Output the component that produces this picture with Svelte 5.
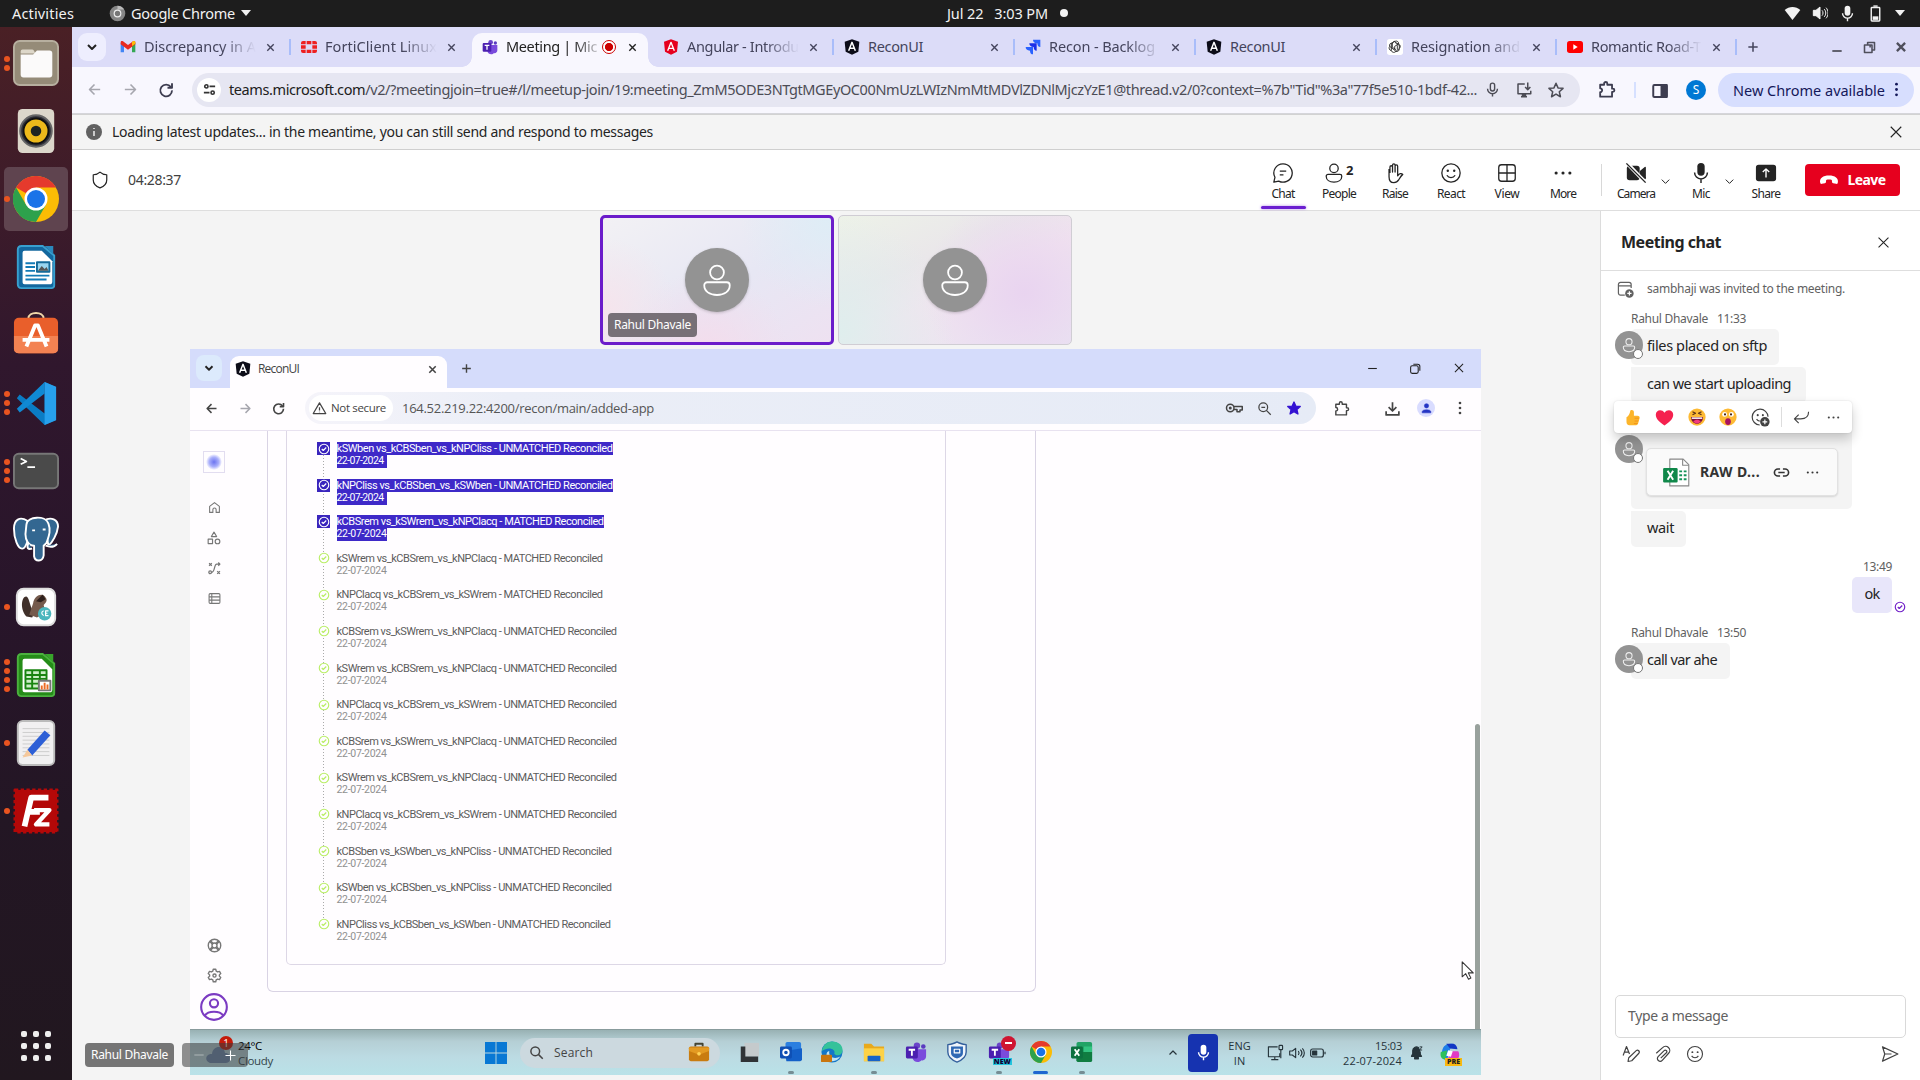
<script>
  // Tightens or loosens tracking so a label takes up a fixed width.
  function fit(node, width) {
    const natural = node.getBoundingClientRect().width;
    const count = node.textContent.length;
    node.style.letterSpacing = `${(width - natural) / count}px`;
  }

  const person = '<circle cx="12" cy="7" r="4.6"/><path d="M5.5 13.5h13a2 2 0 0 1 2 2c0 4-3.5 6.5-8.5 6.5s-8.500-2.500-8.500-6.500a2 2 0 0 1 2-2z"/>';
  const chromeLogo =
    '<g stroke="none"><circle cx="12" cy="12" r="12" fill="#fbbc05"/><path d="M12 12 1.600 6A12 12 0 0 1 22.400 6H12z" fill="#e53a2d"/><path d="M1.600 6A12 12 0 0 0 12 24l5.200-9L12 12 6.800 15z" fill="#2da14c"/><circle cx="12" cy="12" r="6" fill="#fff"/><circle cx="12" cy="12" r="4.700" fill="#1a73e8"/></g>';
  const icons = {
    chevron: '<path d="m6 9 6 6 6-6"/>',
    up: '<path d="m5 15 7-7 7 7"/>',
    x: '<path d="M5 5l14 14M19 5 5 19"/>',
    plus: '<path d="M12 4v16M4 12h16"/>',
    minus: '<path d="M4 12h16"/>',
    back: '<path d="M20 12H5M12 5l-7 7 7 7"/>',
    forward: '<path d="M4 12h15M12 5l7 7-7 7"/>',
    reload: '<path d="M18.500 8A7.800 7.800 0 1 0 20 12.500"/><path d="M20 3v6h-6" />',
    tune: '<circle cx="7" cy="7" r="2.600"/><path d="M12 7h9M3 17h9"/><circle cx="17" cy="17" r="2.600"/>',
    mic: '<rect x="9" y="3" width="6" height="11" rx="3"/><path d="M5 11a7 7 0 0 0 14 0M12 18v4"/>',
    micFill: '<rect x="8" y="1" width="8" height="14" rx="4" fill="currentColor" stroke="none"/><path d="M5 11.500a7 7 0 0 0 14 0M12 18.500V23"/>',
    install: '<path d="M13 4H4v13h17v-4M8 21h8M9 19h6"/><path d="M17 2v9M13.500 8l3.500 3.500L20.500 8"/>',
    star: '<path d="m12 3 2.700 6.200 6.700.6-5 4.500 1.500 6.700-5.900-3.600L6.100 21l1.500-6.700-5-4.500 6.700-.6z"/>',
    starFill: '<path d="m12 3 2.700 6.200 6.700.6-5 4.500 1.500 6.700-5.900-3.600L6.100 21l1.500-6.700-5-4.500 6.700-.6z" fill="currentColor"/>',
    puzzle: '<path d="M4 6h5V4.500a2 2 0 0 1 4 0V6h6v5h1a2 2 0 0 1 0 4h-1v6H4v-5.500a2.500 2.500 0 0 0 0-5z"/>',
    panel: '<rect x="3" y="4" width="18" height="16" rx="1.500"/><path d="M14 4h7v16h-7z" fill="currentColor"/>',
    dots: '<g fill="currentColor" stroke="none"><circle cx="12" cy="4.500" r="2"/><circle cx="12" cy="12" r="2"/><circle cx="12" cy="19.500" r="2"/></g>',
    more: '<g fill="currentColor" stroke="none"><circle cx="4.500" cy="12" r="1.700"/><circle cx="12" cy="12" r="1.700"/><circle cx="19.500" cy="12" r="1.700"/></g>',
    restore: '<rect x="4" y="8" width="12" height="12"/><path d="M9 8V4h11v12h-4M13 8v4"/>',
    winRestore: '<rect x="3" y="7" width="14" height="14" rx="3"/><path d="M8 4h8a4 4 0 0 1 4 4v8"/>',
    info: '<circle cx="12" cy="12" r="12" fill="#616161" stroke="none"/><path d="M12 10.500V18M12 6v1.500" stroke="#fff"/>',
    shield: '<path d="M12 1.500C9.500 4 6.500 5 3 5v7c0 5 3.500 8.500 9 10.500 5.500-2 9-5.500 9-10.500V5c-3.500 0-6.500-1-9-3.500z"/>',
    chat: '<path d="M12 2a10 10 0 1 1-4.700 18.800L2 22l1.200-5.300A10 10 0 0 1 12 2zM8.500 10h7M8.500 14h4"/>',
    person,
    hand: '<path d="M6.500 12V5.500a1.400 1.400 0 0 1 2.800 0V11 3.500a1.400 1.400 0 0 1 2.800 0V11 4.500a1.400 1.400 0 0 1 2.800 0V15c2-2.500 4-3 5.600-1.500-2 1.500-3 3.500-4.500 6-1.200 2-3 3-5.200 3-4 0-5.300-3-5.300-6.500V7.500"/>',
    smile: '<circle cx="12" cy="12" r="10"/><path d="M7.500 14.500c2 3.300 7 3.300 9 0"/><g fill="currentColor" stroke="none"><circle cx="8.500" cy="9.500" r="1.300"/><circle cx="15.500" cy="9.500" r="1.300"/></g>',
    grid: '<rect x="3" y="3" width="18" height="18" rx="3"/><path d="M12 3v18M3 12h18"/>',
    cameraOff: '<rect x="2" y="4" width="14" height="16" rx="3" fill="currentColor" stroke="none"/><path d="M17 10l5-4v12l-5-4z" fill="currentColor"/><path d="M2 1l21 22" stroke="#fff" stroke-width="4"/><path d="M1.500 1.500l21 21"/>',
    share: '<rect x="1" y="3" width="22" height="18" rx="3" fill="currentColor" stroke="none"/><path d="M12 17V8M8.500 11 12 7.500l3.500 3.500" stroke="#fff"/>',
    hangup: '<path d="M1.500 15.500C0 9.500 5 6.500 12 6.500s12 3 10.500 9c-.3 1-1 1.300-2 1.100l-3.500-.7c-1-.2-1.300-.8-1.400-1.700l-.2-2.200c-2-.8-4.800-.8-6.800 0l-.2 2.200c-.1.900-.4 1.500-1.400 1.700l-3.500.7c-1 .2-1.700-.1-2-1.100z" fill="currentColor" stroke="none"/>',
    calendar: '<path d="M11 20H5a3 3 0 0 1-3-3V5a3 3 0 0 1 3-3h12a3 3 0 0 1 3 3v5M2 7h18"/><circle cx="17.500" cy="17.500" r="6" fill="currentColor" stroke="none"/><path d="M17.500 14.500v6M14.500 17.500h6" stroke="#fff"/>',
    reply: '<path d="M8 8l-6 6 6 6M2 14h9c7 0 11-3.500 11-10"/>',
    addEmoji: '<path d="M11 21.500A10 10 0 1 1 21.500 11M7 14c1 1.500 2 2.200 4 2.500"/><g fill="currentColor" stroke="none"><circle cx="8.500" cy="9" r="1.300"/><circle cx="15" cy="9" r="1.300"/><circle cx="17.500" cy="17.500" r="6"/></g><path d="M17.500 14.500v6M14.500 17.500h6" stroke="#fff"/>',
    link: '<path d="M10 7H7a5 5 0 0 0 0 10h3M14 7h3a5 5 0 0 1 0 10h-3M7.500 12h9"/>',
    format: '<path d="M1.500 14 6 2l4 10M3.500 9.500h5.500M8 22l1-5L19 7.500a2.500 2.500 0 0 1 3.500 3.500L13 21l-5 1z"/>',
    clip: '<path d="m3 11 8.500-7.500a5.300 5.300 0 0 1 8 7.500L11 20.500a3.700 3.700 0 0 1-5.500-5L13.500 7.500a2 2 0 0 1 3 2.800L9 17.500"/>',
    send: '<path d="M2 2.500 22.500 12 2 21.500 5 12zM5 12h9"/>',
    checkCircle: '<circle cx="12" cy="12" r="9.500"/><path d="m7.500 12 3 3 6-6"/>',
    warn: '<path d="M12 3 22 20H2zM12 10v5M12 17v1"/>',
    key: '<circle cx="7" cy="12" r="5"/><circle cx="7" cy="12" r="1"/><path d="M12 10h11v4.500h-3V17h-4v-3h-4"/>',
    zoom: '<circle cx="10" cy="10" r="7"/><path d="m15 15 7 7M7 10h6"/>',
    search: '<circle cx="10" cy="10" r="7"/><path d="m15 15 7 7"/>',
    download: '<path d="M12 3v12M6.500 10l5.500 5.500L17.500 10M3 16v5h18v-5"/>',
    user: '<circle cx="12" cy="7" r="4" fill="currentColor"/><path d="M4 20v-2c0-5 16-5 16 0v2z" fill="currentColor"/>',
    home: '<path d="M3 21V10l9-7 9 7v11h-6v-5a3 3 0 0 0-6 0v5z"/>',
    shapes: '<path d="m12 2 4.500 7.500h-9z"/><rect x="2" y="14" width="7.500" height="7.500"/><circle cx="18" cy="17.800" r="4"/>',
    route: '<path d="m2 2 5 5M7 2 2 7M17 17l5 5M22 17l-5 5M22 4h-6c-5 0-3 15-9 15M19 1l3 3-3 3"/><circle cx="4" cy="19" r="2.500"/>',
    list: '<rect x="2" y="3" width="20" height="18" rx="2"/><path d="M2 9h20M2 15h20M7 3v18"/>',
    help: '<circle cx="12" cy="12" r="10"/><circle cx="12" cy="12" r="4"/><path d="m5 5 4 4M19 5l-4 4M5 19l4-4M19 19l-4-4" stroke-width="4"/>',
    gear: '<path d="M10 2h4l.7 3 2.300 1.300 3-.9 2 3.400L19.800 11v2l2.200 2.200-2 3.400-3-.9-2.300 1.300-.7 3h-4l-.7-3L7 17.700l-3 .9-2-3.400L4.200 13v-2L2 8.800l2-3.400 3 .9L9.300 5z"/><circle cx="12" cy="12" r="2.500"/>',
    account: '<circle cx="12" cy="12" r="11"/><circle cx="12" cy="8.800" r="3.500"/><path d="M4 19.500c3-4.500 13-4.500 16 0"/>',
    wifi: '<path d="M1 7C7 1.500 17 1.500 23 7L12 21z" fill="currentColor" stroke="none"/>',
    sound: '<path d="M2 8h4l6-5v18l-6-5H2z" fill="currentColor"/><path d="M15 8c2 2 2 6 0 8M18 6c3.500 3 3.500 9 0 12M21 4c4 4 4 12 0 16"/>',
    soundLine: '<path d="M1 9h4l5-4v14l-5-4H1zM14 9c1.500 2 1.500 4 0 6M17 7c3 3 3 7 0 10M20 5c4 4 4 10 0 14"/>',
    battery: '<rect x="6" y="3.500" width="12" height="19" rx="1"/><path d="M9 1.500h6"/><path d="M8 16h8v5H8z" fill="currentColor" stroke="none"/>',
    batteryFlat: '<rect x="1" y="6" width="19" height="12" rx="3"/><path d="M22.500 10v4"/><path d="M4 9h6v6H4z" fill="currentColor"/>',
    monitor: '<path d="M15 4H2v14h16v-5M6 22h10M11 18v4"/><rect x="17" y="2" width="5" height="6" rx="1"/><path d="M19.500 8v12"/>',
    bell: '<path d="M4 18 6 14V9a6 6 0 0 1 9-5l3 8v3l2 3zM9 20h6v2H9z" fill="currentColor"/><path d="M10 8h4l-4 5h4M17 3h4l-4 5h4" stroke-width="1.500"/>',
    cursor: '<path d="M4 1v19l4.500-4 3.500 7 3-1.500-3.300-6.500H18z" fill="#fff"/>',
    chrome: chromeLogo,
    chromeGray: '<g stroke="none"><circle cx="12" cy="12" r="11" fill="#858585"/><path d="M12 1a11 11 0 0 1 9.500 5.500H12z" fill="#bbb"/><path d="m12 23 9.500-16.500L17 14z" fill="#ddd"/><circle cx="12" cy="12" r="5.500" fill="#eee"/><circle cx="12" cy="12" r="3.800" fill="#777"/></g>',
    gmail: '<g stroke="none"><path d="M1 20V6l5 4v10z" fill="#4285f4"/><path d="M18 20V10l5-4v14z" fill="#34a853"/><path d="M1 8V5c0-2 2-2.500 3.500-1.500L12 9l7.500-5.500C21 2.500 23 3 23 5v3L12 16z" fill="#ea2a1f"/><path d="M18 10.500 23 7V5c0-2-2-2.500-3.500-1.500L18 4.600z" fill="#fbbc04"/></g>',
    forti: '<path d="M0 6q0-3 3-3h4v5H0zM8.500 3h7v5h-7zM17 3h4q3 0 3 3v2h-7zM0 9.500h7v5H0zM17 9.500h7v5h-7zM0 16h7v5H3q-3 0-3-3zM8.500 16h7v5h-7zM17 16h7v2q0 3-3 3h-4z" fill="#ee2020" stroke="none"/>',
    teams: '<g stroke="none"><circle cx="13" cy="5" r="3.500" fill="#6b45c9"/><circle cx="20" cy="6" r="2.500" fill="#5a3bc0"/><path d="M8 9h15v8c0 3-3 5-5 4-2 3-9 3-10-3z" fill="#7a4bdc"/><rect x="1" y="6" width="13" height="13" rx="1.500" fill="#4b1fb0"/></g><path d="M4 9.500h7M7.500 9.500V16" stroke="#fff" stroke-width="2"/>',
    angular: '<path d="M12 .5 22.500 4 21 19l-9 4.500L3 19 1.500 4z" fill="#e6001e" stroke="none"/><path d="M7 17.500 12 5l5 12.500M8.500 14h7" stroke="#fff" stroke-width="2"/>',
    angularDark: '<path d="M12 .5 23 4l-1.500 15L12 23.500 2.500 19 1 4z" fill="#0c0c18" stroke="none"/><path d="M7 17.500 12 5l5 12.500M8.500 14h7" stroke="#fff" stroke-width="2.200"/>',
    jira: '<g stroke="none"><path d="M12 1h11v11c-3 0-4.500-2-4.500-5.500C14 6.500 12 4 12 1z" fill="#2a62ff"/><path d="M6.500 6.500h11v11c-3 0-4.500-2-4.500-5.500-4.500 0-6.500-2.500-6.500-5.500z" fill="#1b2fe8"/><path d="M1 12h11v11c-3 0-4.500-2-4.500-5.500C3 17.500 1 15 1 12z" fill="#2a62ff"/></g>',
    gpt: '<rect width="24" height="24" rx="4" fill="#fff" stroke="none"/><g stroke="#222" stroke-width="1.300"><path d="M12 3.500c3-1.500 6 1 5.500 4 3 1.500 3 5 1 6.500.5 3.500-2.500 5.500-5 4.500-2 2.500-6 2-7-1-3-.5-4.500-4-2.500-6.500C3 8 5.500 5.500 8 6c.5-1.500 2-2.700 4-2.500z"/><path d="M8 6v6.500l5.500 3.500M12 3.500 6.500 7v10.500M17.500 7.500 12 4.800M17.500 7.500 11.500 11v5M18.500 14V9.500L13 6.500M13.500 18.500l5-4M4 11l9.500 7.500M15.500 9.500V16"/></g>',
    youtube: '<rect y="3" width="24" height="18" rx="4" fill="#f00" stroke="none"/><path d="m9.500 8 6.500 4-6.500 4z" fill="#fff" stroke="none"/>',
    thumb: '<path d="M3.500 11.500c3-1.500 4.500-4.500 5.500-9.500 2.500-1.500 5 0 5 2.500V9.500h5c2.500 0 3.500 1.500 3 3.500l-2 7c-.5 2-2 3-4 3H7.500c-2.500 0-4-2-4-5z" fill="#fcb52b" stroke="none"/><path d="M15 13h6M15 17h5M14 20.500h5" stroke="#ef8f1c" stroke-width="1.200"/>',
    heart: '<path d="M12 22C6 18 1 14 1 8.500 1 2 9 1 12 6c3-5 11-4 11 2.500C23 14 18 18 12 22z" fill="#f5214f" stroke="none"/>',
    laugh: '<g stroke="none"><circle cx="12" cy="12" r="11.500" fill="#fdba34"/><path d="M4 12h16c0 12-16 12-16 0z" fill="#7c1238"/><path d="M5 12.500h14v2H5z" fill="#fff"/><path d="M7 18c3-3 7-3 10 0-3 3.500-7 3.500-10 0z" fill="#f33a7c"/></g><path d="m6 5 4 2-4 2M18 5l-4 2 4 2" stroke="#55301a" stroke-width="1.600"/>',
    wow: '<g stroke="none"><circle cx="12" cy="12" r="11.500" fill="#fdba34"/><circle cx="7.500" cy="8.500" r="3.300" fill="#fff"/><circle cx="16.500" cy="8.500" r="3.300" fill="#fff"/><circle cx="8" cy="8.500" r="1.400" fill="#402218"/><circle cx="16" cy="8.500" r="1.400" fill="#402218"/><ellipse cx="12" cy="18" rx="3.800" ry="4.500" fill="#a8125f"/></g>',
    excelFile: '<path d="M7 1h12l5 5v19H7z" fill="#fff" stroke="#888" stroke-width="1"/><path d="M18.500 1v5.500H24" stroke="#888" stroke-width="1"/><rect x="1" y="9" width="13" height="13" rx="1" fill="#10884a" stroke="none"/><path d="m5 11.500 5 8M10 11.500l-5 8" stroke="#fff" stroke-width="1.700"/><path d="M15.500 12h2.500M19.500 12H22M15.500 15.500H18M19.500 15.500H22M15.500 19H18M19.500 19H22" stroke="#15925a" stroke-width="1.700"/>',
    excel: '<g stroke="none"><rect x="6" y="1" width="17" height="22" rx="2" fill="#21a366"/><path d="M6 12h17v9a2 2 0 0 1-2 2H8a2 2 0 0 1-2-2z" fill="#107c41"/><path d="M14 6h9v6h-9z" fill="#33c481"/><rect y="6" width="13" height="13" rx="1.500" fill="#0c7140"/></g><path d="m4 9 5 7M9 9l-5 7" stroke="#fff"/>',
    outlook: '<g stroke="none"><rect x="6" y="1" width="17" height="16" rx="2" fill="#2b7fe0"/><path d="M5 11 24 8v12a2 2 0 0 1-2 2H7z" fill="#1460c8"/><rect y="6" width="13" height="13" rx="1.500" fill="#0f4fb4"/></g><circle cx="6.500" cy="12.500" r="3" stroke="#fff"/>',
    edge: '<g stroke="none"><circle cx="12" cy="12" r="11.500" fill="#1376c8"/><path d="M1 11C2 4 7 .5 12 .5c8 0 12 5 11.500 10-.5 6-8 6-9 3 2-5-7-8-13.500-2.500z" fill="#35c29a"/><path d="M9 11c-1 8 7 9 12 6-4 7-14 7-15-2 0-2 1-3.500 3-4z" fill="#bfe3f4"/><rect x="0" y="15" width="12" height="8" rx="1" fill="#c9760f"/></g>',
    folder: '<g stroke="none"><path d="M1 3h8l3 3h11v16H1z" fill="#e9a91c"/><path d="M1 8h22v14H1z" fill="#fdd247"/><rect x="5" y="16" width="14" height="6" rx="1" fill="#1763c8"/></g>',
    defender: '<path d="M12 1c3 2 6 2.500 10 3v8c0 6-5 9-10 11C7 21 2 18 2 12V4c4-.5 7-1 10-3z" fill="#f0f5fb" stroke="#335f9c" stroke-width="1.500"/><path d="M5.500 6h13v7c0 3-3 5-6.500 6-3.500-1-6.500-3-6.500-6z" fill="#2f68b4" stroke="none"/><path d="M9 9h6v4H9z" stroke="#fff" stroke-width="1.300"/>',
    taskview: '<g stroke="none"><rect x="7" y="2" width="16" height="15" fill="#c5cacc"/><path d="M3 6h5v11h14v6H3z" fill="#303336"/></g>',
    briefcase: '<path d="M8 6V3h8v3" stroke="#443"/><rect x="1" y="6" width="22" height="16" rx="2" fill="#c97c10" stroke="none"/><path d="M1 7h22v4l-11 4-11-4z" fill="#e39a22" stroke="none"/><circle cx="12" cy="14" r="2" fill="#ffd255" stroke="none"/>',
    windows: '<path d="M0 0h11.500v11.500H0zM12.500 0H24v11.500H12.500zM0 12.500h11.500V24H0zM12.500 12.500H24V24H12.500z" fill="#0878d4" stroke="none"/>',
    copilot: '<g stroke="none"><path d="M3 14C3 4 8 1 15 2l-3 6-3 11c-4 1-6-1-6-5z" fill="#1f7fe8"/><path d="M8 2h8c3 1 4 4 4 6l-8-1z" fill="#1236c4"/><path d="M21 10c3 5-1 12-6 12H8l5-12z" fill="#e23bc5"/><path d="m2 11 7-2-2 10c-5 0-6-4-5-8z" fill="#2fc05c"/><path d="m10 9 5 1-2 6-5-1z" fill="#fff"/></g>',
    files: '<rect x="1" y="1" width="46" height="46" rx="6" fill="#958b78" stroke="#b7af9f"/><path d="M8 12q0-2 2-2h10q2 0 3 4h-15z" fill="#ddd7c9" stroke="none"/><path d="M8 15h13l4-4h13q3 0 3 3v22q0 3-3 3H11q-3 0-3-3z" fill="#fbfafa" stroke="none"/>',
    rhythm: '<rect x="5" y="1" width="38" height="46" rx="5" fill="#dcd7cb" stroke="none"/><circle cx="24" cy="24" r="16.500" fill="#30313a" stroke="#666"/><circle cx="24" cy="24" r="13" fill="#edb91b" stroke="#111"/><circle cx="24" cy="24" r="5.500" fill="#1e2322" stroke="none"/>',
    writer: '<path d="M9 2h22l12 10v31q0 3-3 3H9q-4 0-4-4V6q0-4 4-4z" fill="#13679e" stroke="#38a0cf"/><path d="M33 2h9v9z" fill="#2a89bd" stroke="none"/><path d="M10 9q0-2 2-2h18l11 11v21q0 3-3 3H12q-2 0-2-2z" fill="#fff" stroke="none"/><path d="M13 20h10M13 24h10M13 28h10M13 33h25M13 37h22" stroke="#137bb6"/><rect x="25" y="19" width="13" height="10" fill="#9ad5ef" stroke="#156a99"/><path d="m26 28 4-5 3 3 2-2 2 4z" fill="#555" stroke="none"/>',
    software: '<path d="M16 7c0-8 16-8 16 0" stroke="#f1d8a9" stroke-width="2"/><rect x="1" y="6" width="46" height="37" rx="5" fill="#e95f2b" stroke="none"/><path d="M1 25h46v13q0 5-5 5H6q-5 0-5-5z" fill="#f38252" stroke="none"/><path d="M14 36 23 14h3l9 22M10 29h28" stroke="#fff" stroke-width="4"/>',
    vscode: '<path d="M33 2 44 7v35l-11 5L4 19l3-4 26 20z" fill="#0a7cc4" stroke="none"/><path d="M33 2 4 30l3 4 26-20z" fill="#1089d3" stroke="none"/><path d="m33 2 12 5v35l-12 5z" fill="#27a0ec" stroke="none"/>',
    terminal: '<rect x="1" y="6" width="46" height="36" rx="5" fill="#4a4a4a" stroke="#777"/><path d="m8 11 6 3-6 3M15 20h8" stroke="#fff" stroke-width="1.800"/>',
    postgres: '<g fill="#336791" stroke="#fff" stroke-width="2"><path d="M15 5C7 0 1 4 1 13c0 10 4 22 9 21 3 0 4-5 6-10z"/><path d="M32 5c8-5 15-1 15 6-1 8-6 17-10 20z"/><path d="M14 9c1-9 20-10 23-1 3 8 0 14-2 20l-3 3v10c-1 7-9 7-10 1V31c-6 0-9-6-9-12z"/><path d="M34 31q8 3 12-2M16 28q-3 8 4 6"/></g><path d="M20 15h3M31 14h3" stroke="#fff"/>',
    beaver: '<rect x="4" y="5" width="40" height="38" rx="7" fill="#fff" stroke="#ddd"/><path d="M14 34C6 24 10 12 14 13c4 2 3 13 9 16l-3 6z" fill="#40302a" stroke="none"/><path d="M21 20c1-8 10-12 13-6 3 4-1 6-2 8l2 8-9 5-8-3z" fill="#745a4c" stroke="none"/><path d="m24 18 7-7 3 5-5 3z" fill="#2f211d" stroke="none"/><circle cx="33" cy="31" r="7" fill="#4bb6bd" stroke="none"/><path d="M32 28q-4 2 0 5M37 28h-3v5h3M34 30.500h2" stroke="#fff" stroke-width="1.200"/>',
    calc: '<path d="M9 2h22l12 10v31q0 3-3 3H9q-4 0-4-4V6q0-4 4-4z" fill="#258c18" stroke="#4bb13e"/><path d="M33 2h9v9z" fill="#38a52b" stroke="none"/><path d="M10 9q0-2 2-2h18l11 11v21q0 3-3 3H12q-2 0-2-2z" fill="#fff" stroke="none"/><rect x="13" y="19" width="22" height="19" fill="#ccefc7" stroke="#188410"/><path d="M13 24h22M13 28h22M13 33h22M20 19v19M28 19v19" stroke="#188410"/><rect x="27" y="30" width="12" height="10" fill="#fff" stroke="#777"/><path d="M30 39v-4M33 39v-7M36 39v-5" stroke="#ed6a22"/>',
    editor: '<rect x="5" y="1" width="38" height="46" rx="5" fill="#f1f0f1" stroke="#bbb"/><path d="M10 9h28M10 13h28M10 17h28M10 21h28M10 25h28M10 29h28M10 33h28M10 37h28" stroke="#ccc" stroke-width="1"/><path d="m15 31 18-20 6 5-19 21z" fill="#2d5fd6" stroke="none"/><path d="m15 31 5 6-10 2z" fill="#f5c89c" stroke="none"/>',
    filezilla: '<rect x="2" y="2" width="44" height="44" fill="#b40808" stroke="#b40808" stroke-width="3" stroke-dasharray="3.500 2.500"/><path d="M12 40 19 10h18M15 25h13" stroke="#fff" stroke-width="6"/><path d="M22 23h16L24 38h14" stroke="#fff" stroke-width="4.500"/>',
    apps: '<g fill="#eee" stroke="none"><rect x="9" y="9" width="6" height="6" rx="2"/><rect x="21" y="9" width="6" height="6" rx="2"/><rect x="33" y="9" width="6" height="6" rx="2"/><rect x="9" y="21" width="6" height="6" rx="2"/><rect x="21" y="21" width="6" height="6" rx="2"/><rect x="33" y="21" width="6" height="6" rx="2"/><rect x="9" y="33" width="6" height="6" rx="2"/><rect x="21" y="33" width="6" height="6" rx="2"/><rect x="33" y="33" width="6" height="6" rx="2"/></g>'
  };

  const dock = [
    ['files', 2], ['rhythm', 0], ['chrome', 1], ['writer', 0], ['software', 0], ['vscode', 3],
    ['terminal', 3], ['postgres', 0], ['beaver', 1], ['calc', 4], ['editor', 1], ['filezilla', 1]
  ];

  const tabs = [
    ['gmail', 'Discrepancy in A', 112], ['forti', 'FortiClient Linux', 112], ['teams', 'Meeting | Mic', 91],
    ['angular', 'Angular - Introdu', 112], ['angularDark', 'ReconUI', 55], ['jira', 'Recon - Backlog', 106],
    ['angularDark', 'ReconUI', 55], ['gpt', 'Resignation and', 109], ['youtube', 'Romantic Road-T', 110]
  ];

  const actions = [
    ['chat', 'Chat', 23], ['person', 'People', 34], ['hand', 'Raise', 26],
    ['smile', 'React', 28], ['grid', 'View', 25], ['more', 'More', 26]
  ];

  const jobs = [
    ['kSWben vs_kCBSben_vs_kNPCliss - UNMATCHED Reconciled', 276, true],
    ['kNPCliss vs_kCBSben_vs_kSWben - UNMATCHED Reconciled', 276, true],
    ['kCBSrem vs_kSWrem_vs_kNPClacq - MATCHED Reconciled', 267, true],
    ['kSWrem vs_kCBSrem_vs_kNPClacq - MATCHED Reconciled', 266],
    ['kNPClacq vs_kCBSrem_vs_kSWrem - MATCHED Reconciled', 266],
    ['kCBSrem vs_kSWrem_vs_kNPClacq - UNMATCHED Reconciled', 280],
    ['kSWrem vs_kCBSrem_vs_kNPClacq - UNMATCHED Reconciled', 280],
    ['kNPClacq vs_kCBSrem_vs_kSWrem - UNMATCHED Reconciled', 280],
    ['kCBSrem vs_kSWrem_vs_kNPClacq - UNMATCHED Reconciled', 280],
    ['kSWrem vs_kCBSrem_vs_kNPClacq - UNMATCHED Reconciled', 280],
    ['kNPClacq vs_kCBSrem_vs_kSWrem - UNMATCHED Reconciled', 280],
    ['kCBSben vs_kSWben_vs_kNPCliss - UNMATCHED Reconciled', 275],
    ['kSWben vs_kCBSben_vs_kNPCliss - UNMATCHED Reconciled', 275],
    ['kNPCliss vs_kCBSben_vs_kSWben - UNMATCHED Reconciled', 274]
  ];

  const taskApps = ['briefcase', 'taskview', 'outlook', 'edge', 'folder', 'teams', 'defender', 'teams', 'chrome', 'excel'];
</script>

{#snippet icon(name, size, weight = 2, box = 24)}
  <svg class="icon" width={size} height={size} viewBox="0 0 {box} {box}" fill="none" stroke="currentColor" stroke-width={weight} stroke-linejoin="round">{@html icons[name]}</svg>
{/snippet}

{#snippet avatar()}
  <span class="avatar">{@render icon('person', 16, 1.6)}<i></i></span>
{/snippet}

<div class="desktop">
  <header class="topbar">
    <span class="act"><span class="t" use:fit={62}>Activities</span></span>
    <span class="app">{@render icon('chromeGray', 17)}<span class="t" use:fit={104}>Google Chrome</span><b class="tri"></b></span>
    <span class="clock"><span class="t" use:fit={101}>Jul 22   3:03 PM</span><i></i></span>
    <span class="tray">
      {@render icon('wifi', 17)}{@render icon('sound', 16, 1.5)}{@render icon('micFill', 17)}{@render icon('battery', 17)}<b class="tri"></b>
    </span>
  </header>

  <div class="below">
    <nav class="dock">
      {#each dock as [name, dots]}
        <div class="dock-item" class:current={name === 'chrome'}>
          <span class="dots">{#each Array(dots) as _}<i></i>{/each}</span>
          {@render icon(name, 46, 2, name === 'chrome' ? 24 : 48)}
        </div>
      {/each}
      <div class="dock-item apps">{@render icon('apps', 48, 2, 48)}</div>
    </nav>

    <div class="browser">
      <div class="tabstrip">
        <span class="tab-search">{@render icon('chevron', 16, 3)}</span>
        {#each tabs as [name, title, width], i}
          <div class="tab" class:active={i === 2} class:nosep={i === 1 || i === 2} class:short={i === 4 || i === 6} class:late={i > 6}>
            {@render icon(name, 16)}
            <span class="title"><span class="t" use:fit={width}>{title}</span></span>
            {#if i === 2}<span class="rec"></span>{/if}
            <span class="close">{@render icon('x', 11, 3)}</span>
          </div>
        {/each}
        <span class="newtab">{@render icon('plus', 14, 2.6)}</span>
        <span class="win min">{@render icon('minus', 14, 3)}</span>
        <span class="win">{@render icon('restore', 15, 2.5)}</span>
        <span class="win">{@render icon('x', 14, 4)}</span>
      </div>

      <div class="toolbar">
        <span class="dim">{@render icon('back', 17, 2.3)}</span>
        <span class="dim">{@render icon('forward', 17, 2.3)}</span>
        <span>{@render icon('reload', 18, 2.5)}</span>
        <div class="omnibox">
          <span class="site">{@render icon('tune', 15, 2.6)}</span>
          <span class="url"><span class="t" use:fit={1248}><b>teams.microsoft.com</b>/v2/?meetingjoin=true#/l/meetup-join/19:meeting_ZmM5ODE3NTgtMGEyOC00NmUzLWIzNmMtMDVlZDNlMjczYzE1@thread.v2/0?context=%7b"Tid"%3a"77f5e510-1bdf-42...</span></span>
          {@render icon('mic', 17)}{@render icon('install', 18)}{@render icon('star', 18)}
        </div>
        <span class="ext">{@render icon('puzzle', 19, 2.3)}</span>
        <span class="panel">{@render icon('panel', 18, 2.6)}</span>
        <span class="who">S</span>
        <div class="update"><span class="t" use:fit={152}>New Chrome available</span>{@render icon('dots', 17)}</div>
      </div>

      <div class="notice">
        {@render icon('info', 16)}
        <span class="t" use:fit={541}>Loading latest updates... in the meantime, you can still send and respond to messages</span>
        <span class="push">{@render icon('x', 18, 1.5)}</span>
      </div>

      <div class="meetbar">
        {@render icon('shield', 18, 1.6)}
        <span class="timer t" use:fit={53}>04:28:37</span>
        <div class="actions">
          {#each actions as [name, label, width], i}
            <div class="action" class:on={i === 0}>
              <span class="glyph" class:counted={name === 'person'}>{@render icon(name, 22, 1.4)}{#if name === 'person'}<b>2</b>{/if}</span>
              <span class="t" use:fit={width}>{label}</span>
            </div>
          {/each}
        </div>
        <div class="devices">
          <div class="action"><span class="glyph">{@render icon('cameraOff', 22, 1.5)}</span><span class="t" use:fit={38}>Camera</span></div>
          {@render icon('chevron', 15, 1.6)}
          <div class="action"><span class="glyph">{@render icon('micFill', 22, 1.6)}</span><span class="t" use:fit={18}>Mic</span></div>
          {@render icon('chevron', 15, 1.6)}
          <div class="action"><span class="glyph">{@render icon('share', 22, 1.5)}</span><span class="t" use:fit={29}>Share</span></div>
        </div>
        <div class="leave">{@render icon('hangup', 20)}<span class="t" use:fit={38}>Leave</span></div>
      </div>

      <div class="meeting">
        <main class="stage">
          <div class="tiles">
            <div class="tile speaking"><span class="face">{@render icon('person', 36, 1.2)}</span><span class="name"><span class="t" use:fit={77}>Rahul Dhavale</span></span></div>
            <div class="tile other"><span class="face">{@render icon('person', 36, 1.2)}</span></div>
          </div>

          <section class="shared">
            <div class="s-tabs">
              <span class="s-search">{@render icon('chevron', 14, 3.2)}</span>
              <div class="s-tab">{@render icon('angularDark', 16)}<span class="t" use:fit={41}>ReconUI</span><span class="push">{@render icon('x', 11, 3.4)}</span></div>
              {@render icon('plus', 13, 2.6)}
              <div class="s-win">{@render icon('minus', 13)}{@render icon('winRestore', 13)}{@render icon('x', 14, 1.8)}</div>
            </div>
            <div class="s-bar">
              <span>{@render icon('back', 15, 2.4)}</span>
              <span class="dim">{@render icon('forward', 15, 2.4)}</span>
              <span>{@render icon('reload', 15, 2.6)}</span>
              <div class="s-omni">
                <span class="chip">{@render icon('warn', 15)}<span class="t" use:fit={55}>Not secure</span></span>
                <span class="s-url t" use:fit={252}>164.52.219.22:4200/recon/main/added-app</span>
                <span class="s-tools">{@render icon('key', 18)}{@render icon('zoom', 15)}<em>{@render icon('starFill', 16)}</em></span>
              </div>
              <span>{@render icon('puzzle', 17)}</span>
              <span>{@render icon('download', 17, 2.4)}</span>
              <span class="s-user">{@render icon('user', 13, 1)}</span>
              <span>{@render icon('dots', 16)}</span>
            </div>
            <div class="s-page">
              <aside>
                <span class="logo"><i></i></span>
                {@render icon('home', 13)}{@render icon('shapes', 14)}{@render icon('route', 13, 2.3)}{@render icon('list', 13)}
                <span class="gap"></span>
                <span class="help">{@render icon('help', 15, 2.2)}</span>{@render icon('gear', 15, 2.2)}
                <span class="account">{@render icon('account', 28, 1.8)}</span>
              </aside>
              <div class="card">
                <div class="inner">
                  <ul>
                    {#each jobs as [text, width, selected]}
                      <li class:selected>
                        <span class="mark">{@render icon('checkCircle', 12, 2.2)}</span>
                        <div><p><span class="t" use:fit={width}>{text}</span></p><p class="date"><span class="t" use:fit={50}>22-07-2024</span></p></div>
                      </li>
                    {/each}
                  </ul>
                </div>
              </div>
              <span class="scroll"></span>
              <span class="cursor">{@render icon('cursor', 19, 1.3)}</span>
            </div>
            <div class="taskbar">
              <div class="weather"><svg class="icon" width="26" height="24" viewBox="0 0 26 24"><path d="M5 22c-7-3-3-10 2-9 1-9 12-9 13-1 7 0 7 10 1 10z" fill="#6d8db4" /></svg><i>1</i><div><span class="t" use:fit={24}>24°C</span><span class="t" use:fit={35}>Cloudy</span></div></div>
              <span class="start">{@render icon('windows', 22)}</span>
              <div class="s-find">{@render icon('search', 15, 2.4)}<span class="t" use:fit={39}>Search</span></div>
              <div class="task-apps">
                {#each taskApps as name, i}
                  <span class="task" class:running={i === 2 || i === 4 || i === 7 || i === 9} class:front={i === 8}>{@render icon(name, 22)}{#if i === 7}<b class="stop"></b><b class="new">NEW</b>{/if}</span>
                {/each}
              </div>
              <div class="s-tray">
                <span>{@render icon('up', 12, 2.4)}</span>
                <span class="mictile">{@render icon('micFill', 17)}</span>
                <div class="lang">ENG<br />IN</div>
                {@render icon('monitor', 17, 1.6)}{@render icon('soundLine', 16, 1.7)}{@render icon('batteryFlat', 16, 1.8)}
                <div class="when"><span class="t" use:fit={27}>15:03</span><span class="t" use:fit={59}>22-07-2024</span></div>
                {@render icon('bell', 15)}
                <span class="copilot">{@render icon('copilot', 22)}<b>PRE</b></span>
              </div>
            </div>
          </section>
          <div class="float">
            <span class="name"><span class="t" use:fit={77}>Rahul Dhavale</span></span>
            <span class="zoomer"><span>{@render icon('minus', 14, 1.6)}</span><em>{@render icon('plus', 15, 1.7)}</em></span>
          </div>
        </main>

        <aside class="chat">
          <div class="chat-head"><span class="t" use:fit={100}>Meeting chat</span>{@render icon('x', 17, 1.5)}</div>
          <div class="log">
            <div class="system">{@render icon('calendar', 17, 1.7)}<span class="t" use:fit={198}>sambhaji was invited to the meeting.</span></div>
            <div class="meta"><span class="t" use:fit={77}>Rahul Dhavale</span><span class="t" use:fit={29}>11:33</span></div>
            <div class="bubble w1">{@render avatar()}<span class="t" use:fit={120}>files placed on sftp</span></div>
            <div class="bubble w2 flat"><span class="t" use:fit={144}>can we start uploading</span></div>
            <div class="bubble w3 flat">
              {@render avatar()}
              <div class="file">{@render icon('excelFile', 29, 2, 26)}<b class="t" use:fit={60}>RAW D...</b>{@render icon('link', 17, 2.3)}{@render icon('more', 15, 2)}</div>
              <div class="reactions">
                {@render icon('thumb', 17)}{@render icon('heart', 19)}{@render icon('laugh', 18)}{@render icon('wow', 18)}{@render icon('addEmoji', 19, 1.5)}
                <i></i>{@render icon('reply', 17, 1.6)}{@render icon('more', 15)}
              </div>
            </div>
            <div class="bubble w4 flat"><span class="t" use:fit={27}>wait</span></div>
            <div class="mine"><span class="t" use:fit={29}>13:49</span><div class="own"><span class="t" use:fit={15}>ok</span></div><span class="seen">{@render icon('checkCircle', 12, 2.3)}</span></div>
            <div class="meta second"><span class="t" use:fit={77}>Rahul Dhavale</span><span class="t" use:fit={29}>13:50</span></div>
            <div class="bubble w5">{@render avatar()}<span class="t" use:fit={70}>call var ahe</span></div>
          </div>
          <div class="compose">
            <div class="field"><span class="t" use:fit={100}>Type a message</span></div>
            <div class="tools">{@render icon('format', 18, 1.6)}{@render icon('clip', 18, 1.6)}{@render icon('smile', 18, 1.5)}<span class="push">{@render icon('send', 18, 1.6)}</span></div>
          </div>
        </aside>
      </div>
    </div>
  </div>
</div>

<style>
  :global(body) { margin: 0; }
  .desktop, .desktop * { box-sizing: border-box; }
  .desktop { width: 1920px; height: 1080px; overflow: hidden; display: flex; flex-direction: column; font: 14.5px/20px "Noto Sans", sans-serif; color: #242424; }
  .icon { display: block; flex: none; }
  .t { white-space: pre; display: inline-block; flex: none; }
  .push { margin-left: auto; }
  .tri { border: 5px solid transparent; border-top: 6px solid #f2f2f2; border-bottom: 0; }

  .topbar { height: 27px; background: #1d1d1d; color: #f2f2f2; display: grid; grid-template-columns: 98px 849px 1fr auto; align-items: center; padding-left: 12px; padding-bottom: 1px; }
  .topbar > span { display: flex; align-items: center; }
  .app .t { margin: 0 6px 0 5px; }
  .app { margin-left: -1px; }
  .clock { margin-left: -12px; }
  .clock i { width: 8px; height: 8px; border-radius: 50%; background: #f2f2f2; margin-left: 12px; }
  .tray { gap: 11px; padding-right: 15px; }

  .below { flex: 1; display: flex; min-height: 0; }
  .dock { width: 72px; background: linear-gradient(#4a2025, #3c1b2a 18%, #30172d 32%, #28152a 55%, #231624 75%, #21171f); display: flex; flex-direction: column; padding-top: 4px; }
  .dock-item { height: 64px; width: 64px; margin: 0 4px 4px; border-radius: 5px; display: flex; align-items: center; }
  .dock-item.current { background: #5f444f; }
  .dots { width: 9px; display: flex; flex-direction: column; gap: 3px; align-items: flex-start; }
  .dots i { width: 6px; height: 6px; border-radius: 50%; background: #e95420; }
  .apps { margin-top: auto; margin-bottom: 2px; padding-left: 8px; }

  .browser { flex: 1; display: flex; flex-direction: column; background: #f8f7fe; min-width: 0; }
  .tabstrip { height: 40px; background: #dcdcf8; display: flex; align-items: center; padding-left: 6px; color: #44445c; }
  .tab-search { width: 28px; height: 28px; border-radius: 9px; background: #eeeefe; display: grid; place-items: center; color: #222; margin-right: 3px; }
  .tab { width: 181px; height: 28px; display: flex; align-items: center; padding: 0 14px 0 11px; position: relative; line-height: 18px; }
  .tab::after { content: ""; position: absolute; right: -1px; top: 6px; width: 2px; height: 16px; background: #a9bdfa; }
  .tab.late { width: 180px; }
  .tab.nosep::after { background: transparent; }
  .tab .title { flex: 1; margin-left: 8px; height: 20px; mask-image: linear-gradient(90deg, #000 68%, transparent 98%); }
  .tab .close { margin-left: 7px; }
  .tab.short .title { mask-image: none; }
  .tab.active { height: 34px; align-self: flex-end; background: #f8f7fe; border-radius: 10px 10px 0 0; color: #222; padding-bottom: 6px; width: 176px; margin: 0 4px 0 1px; padding-left: 10px; padding-right: 10px; }
  .tab.active::before { content: ""; position: absolute; left: -10px; right: -10px; bottom: 0; height: 10px; background: radial-gradient(circle at 0 0, transparent 9.5px, #f8f7fe 10px) left / 10px 10px no-repeat, radial-gradient(circle at 100% 0, transparent 9.5px, #f8f7fe 10px) right / 10px 10px no-repeat; }
  .tab.active .rec { margin-left: -4px; margin-right: 4px; }
  .rec { width: 14px; height: 14px; border-radius: 50%; border: 1.5px solid #c00; background: radial-gradient(closest-side, #c00 0 62%, #fff 74%); }
  .newtab { margin-left: 10px; }
  .win { color: #4f4f5c; width: 32px; display: grid; place-items: center; }
  .win.min { margin-left: 61px; padding-top: 8px; }

  .toolbar { height: 47px; border-bottom: 1px solid #d5d5da; display: grid; grid-template-columns: 44px 28px 48px 1388px 54px 52px 32px 196px; align-items: center; color: #3d3d50; padding-bottom: 1px; }
  .toolbar > span { display: grid; place-items: center; }
  .toolbar > span:nth-child(3) { padding-right: 5px; }
  .toolbar > .ext { padding-right: 2px; }
  .dim { color: #a6a6ae; }
  .omnibox { height: 34px; border-radius: 17px; background: #e6e6f2; display: flex; align-items: center; gap: 14px; padding: 0 15px 0 5px; color: #4c4c55; }
  .site { flex: none; width: 24px; height: 24px; border-radius: 50%; background: #fff; display: grid; place-items: center; color: #333; margin-right: -6px; }
  .url { flex: none; width: 1241px; padding-bottom: 1px; }
  .url b { font-weight: 400; color: #202020; }
  .panel { border-left: 2px solid #d6e0ff; height: 16px; padding-right: 3px; }
  .toolbar > .who { width: 20px; height: 20px; border-radius: 50%; background: #0078d4; color: #fff; font-size: 12px; }
  .update { height: 34px; border-radius: 17px; background: #d7defe; color: #14185a; display: flex; align-items: center; padding-left: 15px; gap: 3px; }

  .notice { height: 36px; border-top: 1px solid #d2d2d2; border-bottom: 1px solid #cfcfcf; background: #f4f4f4; display: flex; align-items: center; padding: 0 15px 0 14px; gap: 10px; }
  .notice .t { font-size: 14px; }
  .meetbar { height: 61px; background: #fff; border-bottom: 1px solid #dedede; display: flex; align-items: center; padding-left: 19px; }
  .timer { margin-left: 19px; font-size: 14px; color: #424242; }
  .actions { margin-left: auto; display: flex; padding-right: 11px; }
  .actions .action { width: 56px; }
  .action { height: 60px; display: flex; flex-direction: column; align-items: center; padding-top: 11px; font-size: 12px; line-height: 20px; position: relative; }
  .glyph { height: 23px; display: flex; align-items: center; }
  .glyph.counted { padding-right: 11px; }
  .glyph b { font-size: 13px; position: absolute; left: 35px; top: 10px; }
  .action.on::after { content: ""; position: absolute; bottom: 1px; width: 45px; height: 3px; border-radius: 2px; background: #6b1fd0; box-shadow: 0 0 3px #b28be8; }
  .devices { display: flex; align-items: center; border-left: 1px solid #d8d8d8; height: 32px; padding-left: 13px; margin-left: -1px; }
  .devices .action { padding-top: 11px; width: 42px; }
  .devices .action:first-child { margin-right: 1px; }
  .devices > :global(svg) { margin: 2px 7px 0 0; }
  .devices .action:last-child { margin-left: 1px; }
  .leave { margin: 0 20px 0 18px; width: 95px; height: 32px; border-radius: 4px; background: #e6001e; color: #fff; display: flex; align-items: center; justify-content: center; gap: 8px; font-weight: 700; font-size: 14px; }

  .meeting { flex: 1; display: flex; min-height: 0; }
  .stage { flex: 1; background: #f4f4f4; padding: 4px 0 0; position: relative; }
  .tiles { display: flex; justify-content: center; gap: 4px; height: 130px; }
  .tile { width: 234px; height: 130px; border-radius: 5px; display: grid; place-items: center; position: relative; }
  .speaking { border: 3px solid #6b1cca; background: radial-gradient(circle at 0 75%, #f6e4ec, transparent 30%), radial-gradient(circle at 45% 110%, #f4dcec, transparent 45%), radial-gradient(circle at 100% 0, #deedf6, transparent 35%), linear-gradient(150deg, #f2f1f4, #e7e7f4 55%, #eee1f1); }
  .other { border: 1px solid #d0cdd4; background: radial-gradient(circle at 80% 60%, #e9d4f0, transparent 50%), radial-gradient(circle at 0 90%, #dfeeed, transparent 45%), linear-gradient(155deg, #edf2e8, #eae7ea 35%, #f1e4ef 55%, #e9e4f2); }
  .face { width: 64px; height: 64px; border-radius: 50%; background: #939393; color: #fff; display: grid; place-items: center; box-shadow: 0 1px 3px #0003; }
  .name { height: 24px; border-radius: 4px; background: #777077; color: #fff; font-size: 12px; line-height: 24px; padding: 0 6px; }
  .tile .name { position: absolute; left: 5px; bottom: 5px; }

  .shared { width: 1291px; height: 726px; margin: 4px 0 0 118px; background: #fffdff; display: flex; flex-direction: column; font-family: "Open Sans", sans-serif; color: #444; overflow: hidden; }
  .s-tabs { height: 39px; background: #d5dcfb; display: flex; align-items: center; padding-left: 6px; padding-bottom: 1px; }
  .s-search { width: 26px; height: 26px; border-radius: 8px; background: #dceafc; display: grid; place-items: center; margin-right: 8px; color: #222; }
  .s-tab { align-self: flex-end; height: 32px; width: 217px; border-radius: 9px 9px 0 0; background: #fffdff; display: flex; align-items: center; padding: 0 9px 6px 5px; gap: 7px; font-size: 12px; margin: 0 13px -1px 0; }
  .s-win { margin-left: auto; display: flex; align-items: center; gap: 30px; padding-right: 15px; color: #222; }
  .s-bar { height: 43px; border-bottom: 1px solid #e8e2f0; display: grid; grid-template-columns: 42px 26px 47px 1011px 50px 52px 16px 1fr; align-items: center; padding-bottom: 2px; }
  .s-bar > span { display: grid; place-items: center; }
  .s-bar > span:nth-child(3) { padding-right: 6px; }
  .s-bar > span:last-child { padding-left: 5px; }
  .s-omni { height: 32px; border-radius: 16px; background: linear-gradient(90deg, #f5f4fa, #ebeef7 20%, #e6ebf6); display: flex; align-items: center; padding: 0 14px 0 4px; }
  .chip { height: 26px; width: 84px; border-radius: 13px; background: #fff; display: flex; align-items: center; gap: 4px; font-size: 11.500px; padding-left: 3px; font-weight: 500; }
  .s-url { margin-left: 9px; font-size: 13px; color: #555; }
  .s-tools { margin-left: auto; display: flex; align-items: center; gap: 14px; }
  .s-tools em { color: #3412d2; }
  .s-bar .s-user { color: #2434c4; background: #d9dcff; width: 18px; height: 18px; border-radius: 50%; margin-left: -1px; }

  .s-page { flex: 1; display: flex; position: relative; }
  .s-page aside { width: 48px; display: flex; flex-direction: column; align-items: center; gap: 17px; padding: 20px 0 8px; color: #777; }
  .logo { width: 22px; height: 22px; border: 1px solid #e2ddf0; display: grid; place-items: center; margin-bottom: 11px; }
  .logo i { width: 16px; height: 16px; border-radius: 50%; background: radial-gradient(closest-side, #6c74f0, #aab0fb 60%, transparent); }
  .gap { flex: 1; }
  .help { margin-bottom: -2px; }
  .account { color: #7b3bc2; margin-top: -7px; }
  .card { margin: 0 0 37px 29px; width: 769px; height: 561px; border: 1px solid #d9d3e4; border-top: 0; border-radius: 0 0 6px 6px; padding-left: 18px; }
  .inner { width: 660px; height: 534px; border: 1px solid #ddd7e6; border-top: 0; border-radius: 0 0 5px 5px; padding: 12px 0 0 31px; }
  ul { list-style: none; margin: 0; padding: 0; background: repeating-linear-gradient(#aaa 0 1px, transparent 1px 3px) 5px 0 / 1px 480px no-repeat; }
  li { height: 36.600px; display: flex; gap: 6.500px; font: 11px/12px Roboto, sans-serif; color: #5c5c5c; }
  li p { margin: 0; height: 12px; }
  li .date { color: #909090; font-size: 10.500px; }
  .mark { width: 13px; height: 13px; margin-left: -1px; margin-top: -1px; color: #b9ee66; background: radial-gradient(#fffdff 60%, transparent 62%); display: grid; place-items: center; }
  .selected .mark { background: #3a25bd; color: #fff; }
  .selected p .t { color: #fff; background: #3e29c8; height: 13px; }
  .selected p:first-child .t { margin-top: -1px; padding-top: 1px; }
  .selected:nth-child(-n + 2) .date .t { padding-right: 3px; }
  .scroll { position: absolute; right: 1px; bottom: 0; width: 5px; height: 305px; border-radius: 3px 3px 0 0; background: #99a19d; }
  .cursor { position: absolute; left: 1269px; top: 530px; color: #333; }

  .taskbar { height: 46px; background: linear-gradient(#98b1b3, #b5cfd5 25%, #bcdbe3 60%, #b9e2e8); border-top: 1px solid #889a9c; display: flex; align-items: center; font-size: 11.500px; line-height: 15px; position: relative; }
  .weather { width: 295px; display: flex; align-items: center; padding-left: 15px; position: relative; }
  .weather > i { position: absolute; left: 29px; top: -2px; width: 14px; height: 14px; border-radius: 50%; background: #c41b0a; color: #fff; font: 10px/14px "Open Sans", sans-serif; text-align: center; }
  .weather > div { display: flex; flex-direction: column; align-items: flex-start; margin-left: 7px; color: #33454a; }
  .weather .t:first-child { color: #000; }
  .s-find { margin-left: 13px; width: 200px; height: 30px; border-radius: 15px; background: #ccd9df; display: flex; align-items: center; padding-left: 9px; gap: 10px; font-size: 12px; margin-right: -45px; }
  .task-apps { display: flex; }
  .task { width: 41.700px; height: 42px; display: grid; place-items: center; position: relative; padding-bottom: 1px; }
  .task:first-child { width: 53px; padding-right: 5px; }
  .running::after, .front::after { content: ""; position: absolute; bottom: 0; width: 6px; height: 3px; border-radius: 2px; background: #758d94; }
  .front::after { width: 15px; background: #1e66d0; }
  .stop { position: absolute; top: 4px; right: 4px; width: 15px; height: 15px; border-radius: 50%; background: #cf1531; display: grid; place-items: center; }
  .stop::after { content: ""; width: 7px; height: 2px; background: #fff; }
  .new { position: absolute; bottom: 9px; right: 8px; font: 800 7px/7px "Open Sans", sans-serif; background: #24c5dc; color: #103; padding: 0 1px; }
  .s-tray { margin-left: auto; display: flex; align-items: center; gap: 5px; padding-right: 20px; color: #26343b; }
  .mictile { width: 30px; height: 38px; border-radius: 4px; background: #1633b0; color: #fff; display: grid; place-items: center; margin-left: 4px; }
  .lang { width: 33px; text-align: center; margin: 0 6px 0 0; font-size: 11px; }
  .when { width: 71px; display: flex; flex-direction: column; align-items: flex-end; margin-right: 2px; font-size: 11px; }
  .copilot { position: relative; margin-left: 10px; }
  .copilot b { position: absolute; right: -1px; bottom: -2px; font: 800 7px/8px "Open Sans", sans-serif; background: #f9b911; padding: 0 2px; color: #222; }

  .float { position: absolute; left: 13px; bottom: 13px; display: flex; gap: 8px; }
  .float .name { background: #757575; }
  .zoomer { width: 66px; height: 24px; border-radius: 4px; background: #3a3a3a8c; display: flex; align-items: center; padding-left: 10px; color: #fff; gap: 17px; }
  .zoomer > span { opacity: 0.45; }

  .chat { width: 320px; border-left: 1px solid #dcdcdc; background: #fff; display: flex; flex-direction: column; }
  .chat-head { height: 60px; border-bottom: 1px solid #dedede; display: flex; align-items: center; justify-content: space-between; padding: 3px 28px 0 20px; font-weight: 700; font-size: 16px; }
  .log { flex: 1; padding: 8px 0 0 30px; display: flex; flex-direction: column; }
  .system { height: 20px; display: flex; align-items: center; gap: 13px; margin-left: -14px; color: #616161; font-size: 12px; }
  .meta { height: 20px; display: flex; gap: 9px; margin-top: 10px; color: #616161; font-size: 12px; line-height: 20px; }
  .bubble { height: 36px; background: #f4f4f4; border-radius: 5px; padding: 7px 0 0 16px; line-height: 18px; position: relative; margin-bottom: 2px; }
  .bubble.flat { border-top-left-radius: 0; }
  .w1 { width: 148px; } .w2 { width: 175px; } .w4 { width: 55px; } .w5 { width: 99px; }
  .w3 { width: 221px; height: 104px; padding: 43px 0 0 15px; }
  .avatar { position: absolute; left: -16px; top: 2px; width: 28px; height: 28px; border-radius: 50%; background: #939393; color: #eee; display: grid; place-items: center; }
  .w3 .avatar { top: 30px; }
  .avatar i { position: absolute; right: 0; bottom: 0; width: 10px; height: 10px; border-radius: 50%; background: #fff; border: 1px solid #777; }
  .file { width: 192px; height: 48px; border-radius: 5px; background: #fafafa; border: 1px solid #e2e2e2; box-shadow: 0 1px 2px #0002; display: flex; align-items: center; padding-left: 15px; font-size: 14px; color: #333; }
  .file b { margin: 0 13px 0 9px; }
  .file > :global(svg:last-child) { margin-left: 15px; }
  .reactions { position: absolute; left: -17px; top: -4px; width: 238px; height: 32px; border-radius: 4px; background: #fff; box-shadow: 0 6px 12px #0003, 0 0 2px #0002; display: flex; align-items: center; padding-left: 10px; gap: 13.8px; color: #424242; }
  .reactions i { width: 1px; height: 20px; background: #ddd; margin: 0 -3px 0 -3px; }
  .reactions > :global(svg:last-child) { margin-left: 2px; }
  .mine { align-self: flex-end; margin: 8px 28px 0 0; display: flex; flex-direction: column; align-items: flex-end; position: relative; color: #616161; font-size: 12px; line-height: 20px; }
  .own { width: 40px; height: 36px; margin-top: 0; border-radius: 5px; background: #e8e6fa; color: #242424; text-align: center; font-size: 14.500px; line-height: 32px; }
  .seen { position: absolute; right: -14px; bottom: 0; color: #7020c8; }
  .meta.second { margin-top: 10px; }
  .compose { padding: 0 14px 0 14px; height: 85px; }
  .field { height: 43px; border: 1px solid #d9d9d9; border-radius: 5px; color: #616161; padding: 10px 12px; font-size: 14px; }
  .tools { display: flex; gap: 14px; padding: 7px 7px; color: #424242; }
</style>
